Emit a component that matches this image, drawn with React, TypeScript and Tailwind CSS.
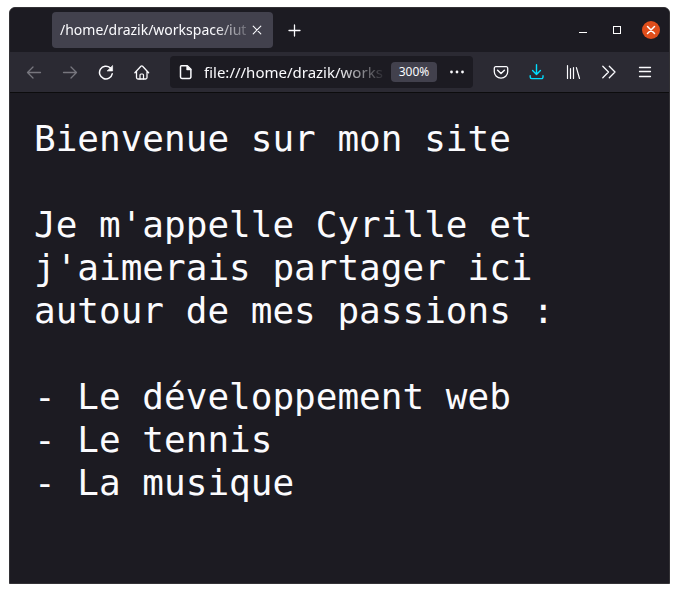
import type { ReactNode } from 'react';

const PAGE_TEXT = `Bienvenue sur mon site

Je m'appelle Cyrille et j'aimerais partager ici autour de mes passions :

- Le développement web
- Le tennis
- La musique`;

type IconProps = { children: ReactNode; className?: string };

function Icon({ children, className = '' }: IconProps) {
  return (
    <svg
      viewBox="0 0 16 16"
      className={`size-4 shrink-0 ${className}`}
      fill="none"
      stroke="currentColor"
      strokeWidth="1.3"
      strokeLinecap="round"
      strokeLinejoin="round"
      aria-hidden="true"
    >
      {children}
    </svg>
  );
}

type ToolButtonProps = { label: string; disabled?: boolean; className?: string; children: ReactNode };

function ToolButton({ label, disabled, className = 'text-[#fbfbfe]', children }: ToolButtonProps) {
  return (
    <button
      type="button"
      aria-label={label}
      disabled={disabled}
      className={`flex h-8 w-9 shrink-0 items-center justify-center rounded ${className}`}
    >
      <Icon>{children}</Icon>
    </button>
  );
}

function TabBar() {
  return (
    <div className="flex h-11 items-center bg-[#1c1b22] pr-px pl-[42px]">
      <div className="flex h-9 w-[221px] items-center rounded bg-[#42414d] pr-2 pl-2">
        <span className="min-w-0 flex-1 whitespace-nowrap text-[14px] leading-5 [mask-image:linear-gradient(to_right,black_154px,transparent_196px)]">
          /home/drazik/workspace/iut
        </span>
        <button type="button" aria-label="Fermer l'onglet" className="flex w-4 shrink-0 justify-center">
          <Icon>
            <path d="M4.2 4.2l7.6 7.6M11.8 4.2l-7.6 7.6" strokeWidth="1.1" />
          </Icon>
        </button>
      </div>
      <button type="button" aria-label="Nouvel onglet" className="ml-1 flex h-9 w-9 items-center justify-center">
        <Icon>
          <path d="M7.5 3v11M2 8.5h11" />
        </Icon>
      </button>

      {/* Window controls */}
      <div className="ml-auto flex">
        <button type="button" aria-label="Réduire" className="flex w-[34px] justify-center">
          <span className="mt-[11px] h-px w-2 bg-white" />
        </button>
        <button type="button" aria-label="Agrandir" className="flex w-[34px] items-center justify-center">
          <span className="size-2 border border-white" />
        </button>
        <button type="button" aria-label="Fermer" className="flex w-[34px] items-center justify-center">
          <span className="flex size-[18px] items-center justify-center rounded-full bg-[#e04e1b]">
            <Icon className="text-white">
              <path d="M4.5 4.5l7 7M11.5 4.5l-7 7" strokeWidth="1.5" />
            </Icon>
          </span>
        </button>
      </div>
    </div>
  );
}

function AddressBar() {
  return (
    <div className="mx-[10px] flex h-8 min-w-0 flex-1 items-center rounded bg-[#1c1b22] pr-2 pl-2">
      <Icon>
        <path d="M3.5 1.7h5.8l3.6 3.6v7.6a1.5 1.5 0 0 1-1.5 1.5H3.9a1.4 1.4 0 0 1-1.4-1.4V2.7a1 1 0 0 1 1-1z" strokeWidth="1.5" />
        <path d="M8.7 1.7v4.2h4.2z" fill="currentColor" strokeWidth="0.6" />
      </Icon>
      <input
        type="text"
        aria-label="Adresse"
        defaultValue="file:///home/drazik/works"
        className="ml-[10px] min-w-0 flex-1 bg-transparent text-[15px] leading-5 outline-none [mask-image:linear-gradient(to_right,black_calc(100%-50px),transparent)]"
      />
      <button type="button" className="ml-1 h-5 w-[46px] shrink-0 rounded-sm bg-[#42414d] text-xs leading-5">
        300%
      </button>
      <button type="button" aria-label="Actions de la page" className="ml-3 flex shrink-0">
        <Icon>
          <g fill="currentColor" stroke="none">
            <circle cx="2.5" cy="8" r="1.4" />
            <circle cx="8" cy="8" r="1.4" />
            <circle cx="13.5" cy="8" r="1.4" />
          </g>
        </Icon>
      </button>
    </div>
  );
}

function Toolbar() {
  return (
    <div className="flex h-[41px] items-center border-b border-[#0c0c0d] bg-[#2b2a33] px-[6px]">
      <ToolButton label="Précédent" disabled className="text-[#77767e]">
        <path d="M14.5 8.5H1.5M7 3L1.5 8.5L7 14" />
      </ToolButton>
      <ToolButton label="Suivant" disabled className="text-[#77767e]">
        <path d="M1.5 8.5h13M9 3l5.5 5.5L9 14" />
      </ToolButton>
      <ToolButton label="Actualiser">
        <path d="M12.2 3.8A6.4 6.4 0 1 0 14.2 9.8" strokeWidth="1.5" />
        <path d="M14.6 1.8v5.2H9.4z" fill="currentColor" strokeWidth="0.6" />
      </ToolButton>
      <ToolButton label="Accueil">
        <path d="M.9 8.7L6.9 2.3a1.2 1.2 0 0 1 1.7 0l6 6.4M2.5 7.3v6.2A1.5 1.5 0 0 0 4 15h7.5a1.5 1.5 0 0 0 1.5-1.5V7.3" />
        <path d="M6 15v-4a1 1 0 0 1 1-1h1.5a1 1 0 0 1 1 1v4" strokeWidth="1.2" />
      </ToolButton>

      <AddressBar />

      <ToolButton label="Pocket">
        <path d="M2.8 2.7h10.4a1.5 1.5 0 0 1 1.5 1.5v3.5a6.7 6.5 0 0 1-13.4 0V4.2a1.5 1.5 0 0 1 1.5-1.5z" strokeWidth="1.3" />
        <path d="M4.6 6.3L8 9.5l3.4-3.2" strokeWidth="1.5" />
      </ToolButton>
      <ToolButton label="Téléchargements" className="text-[#00ddff]">
        <path d="M7.5 .8v9.7M3.6 6.6l3.9 3.9 3.9-3.9M1.2 11.8v1.3a1.5 1.5 0 0 0 1.5 1.5h9.8a1.5 1.5 0 0 0 1.5-1.5v-1.3" strokeWidth="1.4" />
      </ToolButton>
      <ToolButton label="Bibliothèque">
        <path d="M2.5 1.5v13M5.5 4.5v10M8.5 3.5v11M11.4 3.7l3.1 10.8" strokeWidth="1.2" />
      </ToolButton>
      <ToolButton label="Plus d'outils">
        <path d="M1.8 2.2L7.5 8l-5.7 5.8M8.3 2.2L14 8l-5.7 5.8" strokeWidth="1.3" />
      </ToolButton>
      <ToolButton label="Menu">
        <path d="M2.5 3.5h11M2.5 7.5h11M2.5 12.5h11" strokeWidth="1.3" />
      </ToolButton>
    </div>
  );
}

export default function App() {
  return (
    <div className="flex min-h-screen flex-col bg-white px-[9px] pt-[7px] pb-[9px] font-['Noto_Sans',sans-serif] text-[#fbfbfe]">
      <div className="flex flex-1 flex-col overflow-hidden rounded-t-md border border-[#333236] bg-[#1c1b22]">
        <TabBar />
        <Toolbar />
        <main className="flex-1 p-6">
          <pre className="whitespace-pre-wrap font-['DejaVu_Sans_Mono',monospace] text-[36px] leading-[43px]">
            {PAGE_TEXT}
          </pre>
        </main>
      </div>
    </div>
  );
}
